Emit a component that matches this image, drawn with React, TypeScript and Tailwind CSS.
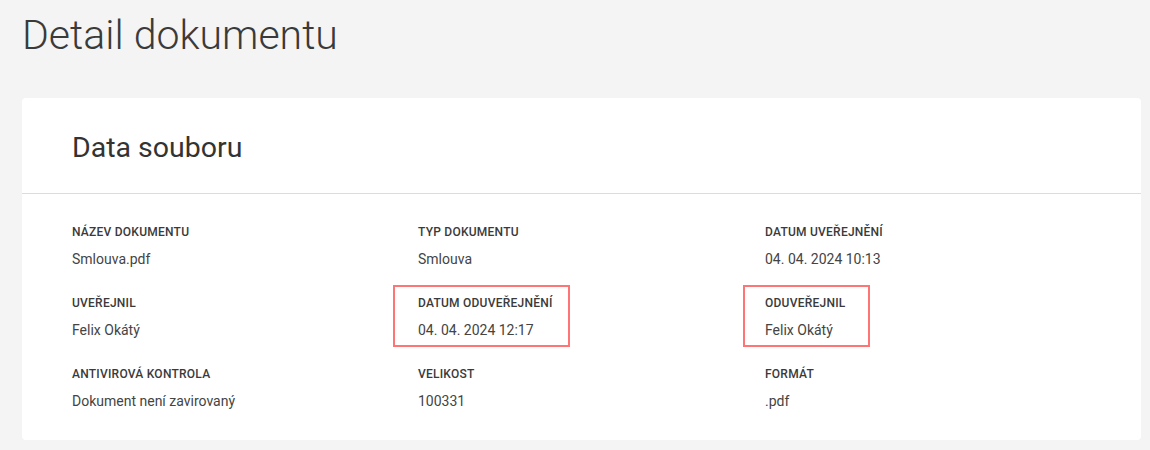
const items = [
  { label: 'Název dokumentu', value: 'Smlouva.pdf' },
  { label: 'Typ dokumentu', value: 'Smlouva' },
  { label: 'Datum uveřejnění', value: '04. 04. 2024 10:13' },
  { label: 'Uveřejnil', value: 'Felix Okátý' },
  { label: 'Datum oduveřejnění', value: '04. 04. 2024 12:17', mark: 'left-[-25px] w-[177px]' },
  { label: 'Oduveřejnil', value: 'Felix Okátý', mark: 'left-[-22px] w-[127px]' },
  { label: 'Antivirová kontrola', value: 'Dokument není zavirovaný' },
  { label: 'Velikost', value: '100331' },
  { label: 'Formát', value: '.pdf' },
]

export default function App() {
  return (
    <div
      className="min-h-[450px] bg-[#f4f4f4] pl-[22px] pr-[9px] pt-[11px] pb-[10px] text-[#333]"
      style={{ fontFamily: 'Roboto, "Noto Sans", sans-serif' }}
    >
      <h1 className="text-[41px] font-light leading-[48px] text-[#3a3a3a]">Detail dokumentu</h1>

      <div className="mt-[39px] rounded-[4px] bg-white">
        <div className="border-b border-[#dcdcdc] pl-[50px] pt-[32px] pb-[27px]">
          <h2 className="text-[28.5px] font-normal leading-[36px] text-[#333]">Data souboru</h2>
        </div>

        <div className="grid grid-cols-[346px_347px_1fr] gap-y-[26px] pl-[50px] pt-[30px] pb-[29px]">
          {items.map((it) => (
            <div key={it.label} className="relative">
              {it.mark && (
                <div className={`absolute top-[-10px] h-[62px] border-2 border-[#ff7575] ${it.mark}`} />
              )}
              <div className="text-[12px] font-medium uppercase leading-4 tracking-[0.02em] text-[#3a3a3a]">
                {it.label}
              </div>
              <div className="mt-[9px] text-[14px] leading-5 text-[#444]">{it.value}</div>
            </div>
          ))}
        </div>
      </div>
    </div>
  )
}
